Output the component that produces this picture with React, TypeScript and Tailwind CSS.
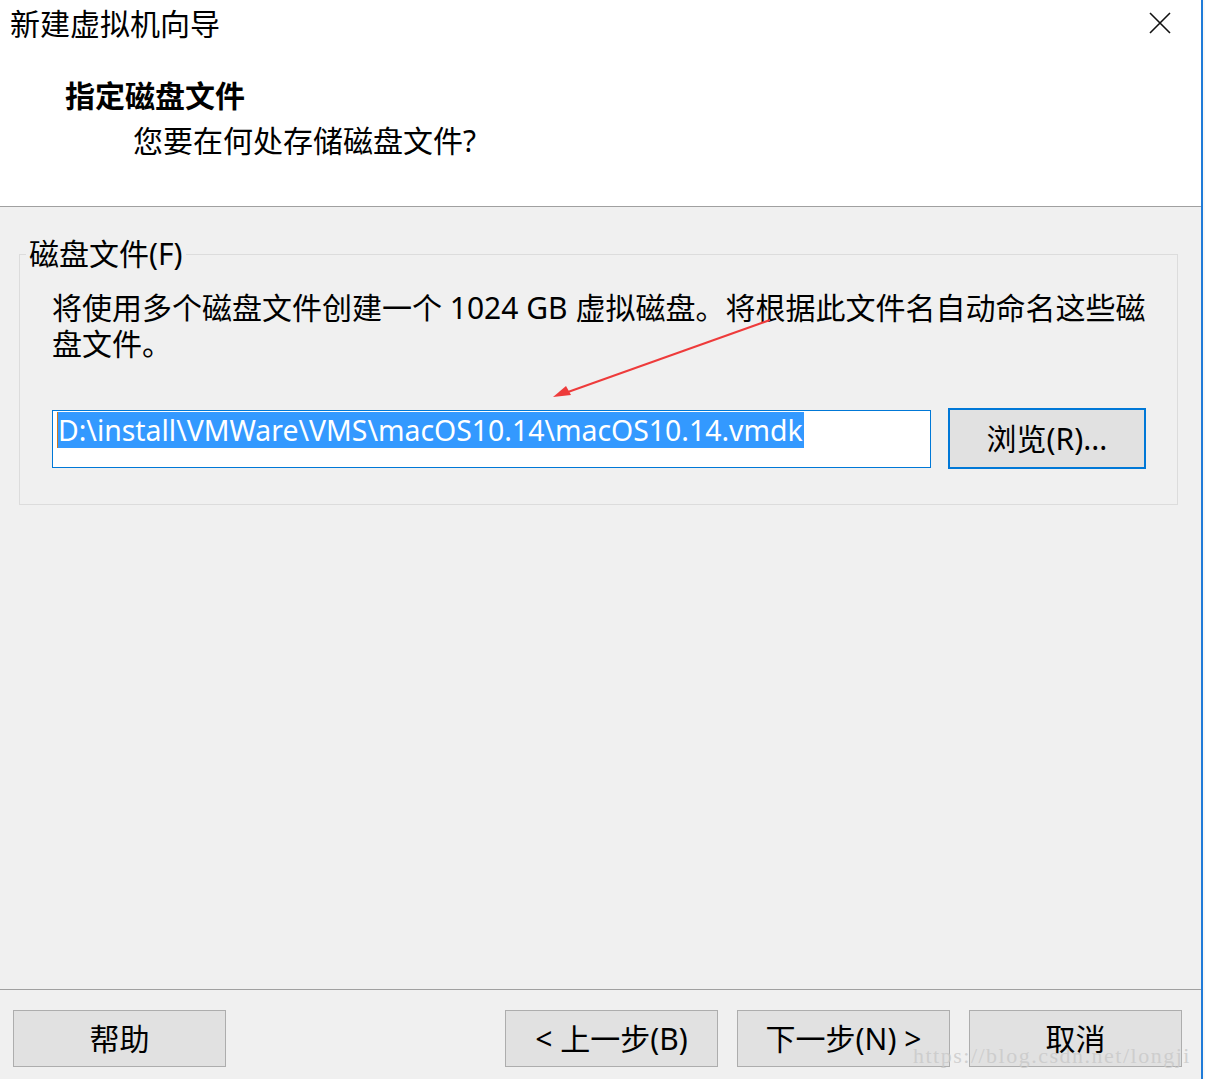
import React from "react";

const ui = "font-['Noto_Sans','Noto_Sans_CJK_SC',sans-serif]";

function WizardButton({ label, className = "" }: { label: string; className?: string }) {
  return (
    <button
      className={`h-[57px] w-[213px] border border-[#adadad] bg-[#e1e1e1] text-[30px] leading-none text-black ${className}`}
    >
      {label}
    </button>
  );
}

export default function App() {
  return (
    <div className={`flex h-[1079px] w-[1205px] bg-[#f8f8f8] ${ui}`}>
      {/* Dialog */}
      <div className="relative flex h-full w-[1201px] flex-col bg-[#f0f0f0]">
        {/* Header */}
        <div className="h-[206px] bg-white">
          <div className="flex h-[48px] items-center justify-between pl-[10px] pr-[30px]">
            <span className="text-[30px] leading-[36px] text-black">新建虚拟机向导</span>
            <svg width="22" height="22" viewBox="0 0 22 22" className="mt-[-2px]">
              <path d="M1 1L21 21M21 1L1 21" stroke="#111" strokeWidth="1.6" />
            </svg>
          </div>
          <h1 className="mt-[30px] pl-[65px] text-[30px] font-bold leading-[36px] text-black">
            指定磁盘文件
          </h1>
          <p className="mt-[9px] pl-[133px] text-[30px] leading-[36px] text-black">
            您要在何处存储磁盘文件?
          </p>
        </div>
        <div className="h-px bg-[#a0a0a0]" />

        {/* Disk file group */}
        <fieldset className="mx-[19px] mt-[29px] w-[1159px] border border-[#dcdcdc] pl-[6px] pb-[35px]">
          <legend className="px-[3px] text-[30px] leading-[36px] text-black">磁盘文件(F)</legend>
          <div className="pl-[26px] pr-[20px]">
            <p className="mt-[18px] text-[30px] leading-[36px] text-black">
              将使用多个磁盘文件创建一个 1024 GB 虚拟磁盘。将根据此文件名自动命名这些磁
              <br />
              盘文件。
            </p>
            <div className="mt-[46px] flex items-center gap-[17px]">
              <div className="h-[58px] w-[879px] border border-[#0078d7] bg-white pl-[4px] pt-[1px]">
                <span className="inline-block border-l border-[#d07a20] bg-[#3399ff] pr-px text-[28.4px] leading-[36px] text-white">
                  D:\install\VMWare\VMS\macOS10.14\macOS10.14.vmdk
                </span>
              </div>
              <button className="h-[61px] w-[198px] border-2 border-[#0078d7] bg-[#e1e1e1] text-[30px] leading-none text-black">
                浏览(R)...
              </button>
            </div>
          </div>
        </fieldset>

        <div className="flex-1" />

        {/* Footer */}
        <div className="h-px bg-[#a0a0a0]" />
        <div className="flex h-[89px] items-start pt-[20px] pl-[13px]">
          <WizardButton label="帮助" />
          <WizardButton label="< 上一步(B)" className="ml-[279px]" />
          <WizardButton label="下一步(N) >" className="ml-[19px]" />
          <WizardButton label="取消" className="ml-[19px]" />
        </div>

        {/* Annotation arrow */}
        <svg
          className="pointer-events-none absolute left-0 top-0"
          width="1201"
          height="1079"
          viewBox="0 0 1201 1079"
        >
          <path d="M770 320 L568 392" stroke="#ee3b3b" strokeWidth="2" fill="none" />
          <path d="M553 397 L566 386 L571 395 Z" fill="#ee3b3b" />
        </svg>

        {/* Watermark */}
        <span className="pointer-events-none absolute left-[913px] top-[1043px] font-['Liberation_Serif',serif] text-[22px] leading-[26px] tracking-[1.5px] text-[#c8c8c8]/80">
          https://blog.csdn.net/longji
        </span>
      </div>
      <div className="h-full w-[2px] bg-[#1f7bd8]" />
    </div>
  );
}
